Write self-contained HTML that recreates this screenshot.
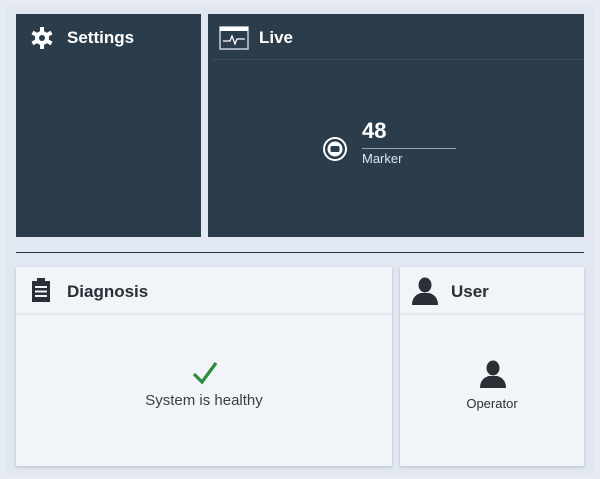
<!DOCTYPE html>
<html><head><style>
body{margin:0;width:600px;height:479px;background:#e6ebf3;font-family:"Liberation Sans",sans-serif;position:relative;overflow:hidden}
.p{position:absolute;box-sizing:border-box}
.d{background:#2b3c4b;color:#fff}
.l{background:#f1f4f8;color:#2a2f36;box-shadow:0 1px 3px rgba(0,0,0,.2)}
.h{position:absolute;font-weight:bold;font-size:17px}
</style></head><body>
<div class="p" style="left:6px;top:6px;width:588px;height:468px;background:#e2e8f1"></div>
<div class="p d" style="left:16px;top:14px;width:185px;height:223px">
<svg style="position:absolute;left:14px;top:12px" width="24" height="24" viewBox="0 0 24 24"><g fill="#fff"><circle cx="12" cy="12" r="7"/><rect x="10" y="1" width="4" height="22"/><rect x="10" y="1" width="4" height="22" transform="rotate(60 12 12)"/><rect x="10" y="1" width="4" height="22" transform="rotate(120 12 12)"/></g><circle cx="12" cy="12" r="3" fill="#2b3c4b"/></svg>
<div class="h" style="left:51px;top:14px">Settings</div></div>
<div class="p d" style="left:208px;top:14px;width:376px;height:223px">
<svg style="position:absolute;left:11px;top:12px" width="30" height="24" viewBox="0 0 30 24"><rect x="1" y="1" width="28" height="22" fill="none" stroke="#c9d2dc" stroke-width="1.5"/><rect x="1" y="1" width="28" height="4" fill="#fff"/><path d="M4 15h7l2-5 3 8 2-5h8" fill="none" stroke="#fff" stroke-width="1.3"/></svg>
<div class="h" style="left:51px;top:14px">Live</div>
<div style="position:absolute;left:4px;right:0;top:45px;height:1px;background:#3d4e5d"></div>
<svg style="position:absolute;left:114px;top:122px" width="26" height="26" viewBox="0 0 26 26"><circle cx="13" cy="13" r="11" fill="none" stroke="#fff" stroke-width="2"/><circle cx="13" cy="13" r="7.5" fill="#fff"/><rect x="8.5" y="10" width="9" height="6" rx="1.5" fill="#2b3c4b"/></svg>
<div style="position:absolute;left:154px;top:104px;font-size:22px;font-weight:bold">48</div>
<div style="position:absolute;left:154px;top:134px;width:94px;height:1px;background:#9aa5b0"></div>
<div style="position:absolute;left:154px;top:137px;font-size:13px;color:#e0e5ea">Marker</div></div>
<div class="p" style="left:16px;top:252px;width:568px;height:1px;background:#2b3340"></div>
<div class="p l" style="left:16px;top:267px;width:376px;height:199px">
<svg style="position:absolute;left:15px;top:11px" width="20" height="25" viewBox="0 0 20 25"><rect x="1" y="3" width="18" height="21" fill="#2a2f36"/><rect x="6" y="0" width="8" height="5" fill="#2a2f36"/><g fill="#f1f4f8"><rect x="4" y="8" width="12" height="2"/><rect x="4" y="12.5" width="12" height="2"/><rect x="4" y="17" width="12" height="2"/></g></svg>
<div class="h" style="left:51px;top:15px">Diagnosis</div>
<div style="position:absolute;left:0;right:0;top:46px;height:2px;background:#e6eaf0"></div>
<svg style="position:absolute;left:176px;top:94px" width="26" height="24" viewBox="0 0 26 24"><path d="M2 13l8 8L24 2" fill="none" stroke="#2e8b3a" stroke-width="3.2"/></svg>
<div style="position:absolute;left:0;width:376px;text-align:center;top:125px;font-size:15px;color:#3a3f46">System is healthy</div></div>
<div class="p l" style="left:400px;top:267px;width:184px;height:199px">
<svg style="position:absolute;left:12px;top:10px" width="26" height="28" viewBox="0 0 26 28"><ellipse cx="13" cy="8" rx="6.5" ry="7.5" fill="#2a2f36"/><path d="M0 28c0-8 5-11 9-12h8c4 1 9 4 9 12z" fill="#2a2f36"/></svg>
<div class="h" style="left:51px;top:15px">User</div>
<div style="position:absolute;left:0;right:0;top:46px;height:2px;background:#e6eaf0"></div>
<svg style="position:absolute;left:80px;top:93px" width="26" height="28" viewBox="0 0 26 28"><ellipse cx="13" cy="8" rx="6.5" ry="7.5" fill="#2a2f36"/><path d="M0 28c0-8 5-11 9-12h8c4 1 9 4 9 12z" fill="#2a2f36"/></svg>
<div style="position:absolute;left:0;width:184px;text-align:center;top:129px;font-size:13px;color:#2a2f36">Operator</div></div>
</body></html>
